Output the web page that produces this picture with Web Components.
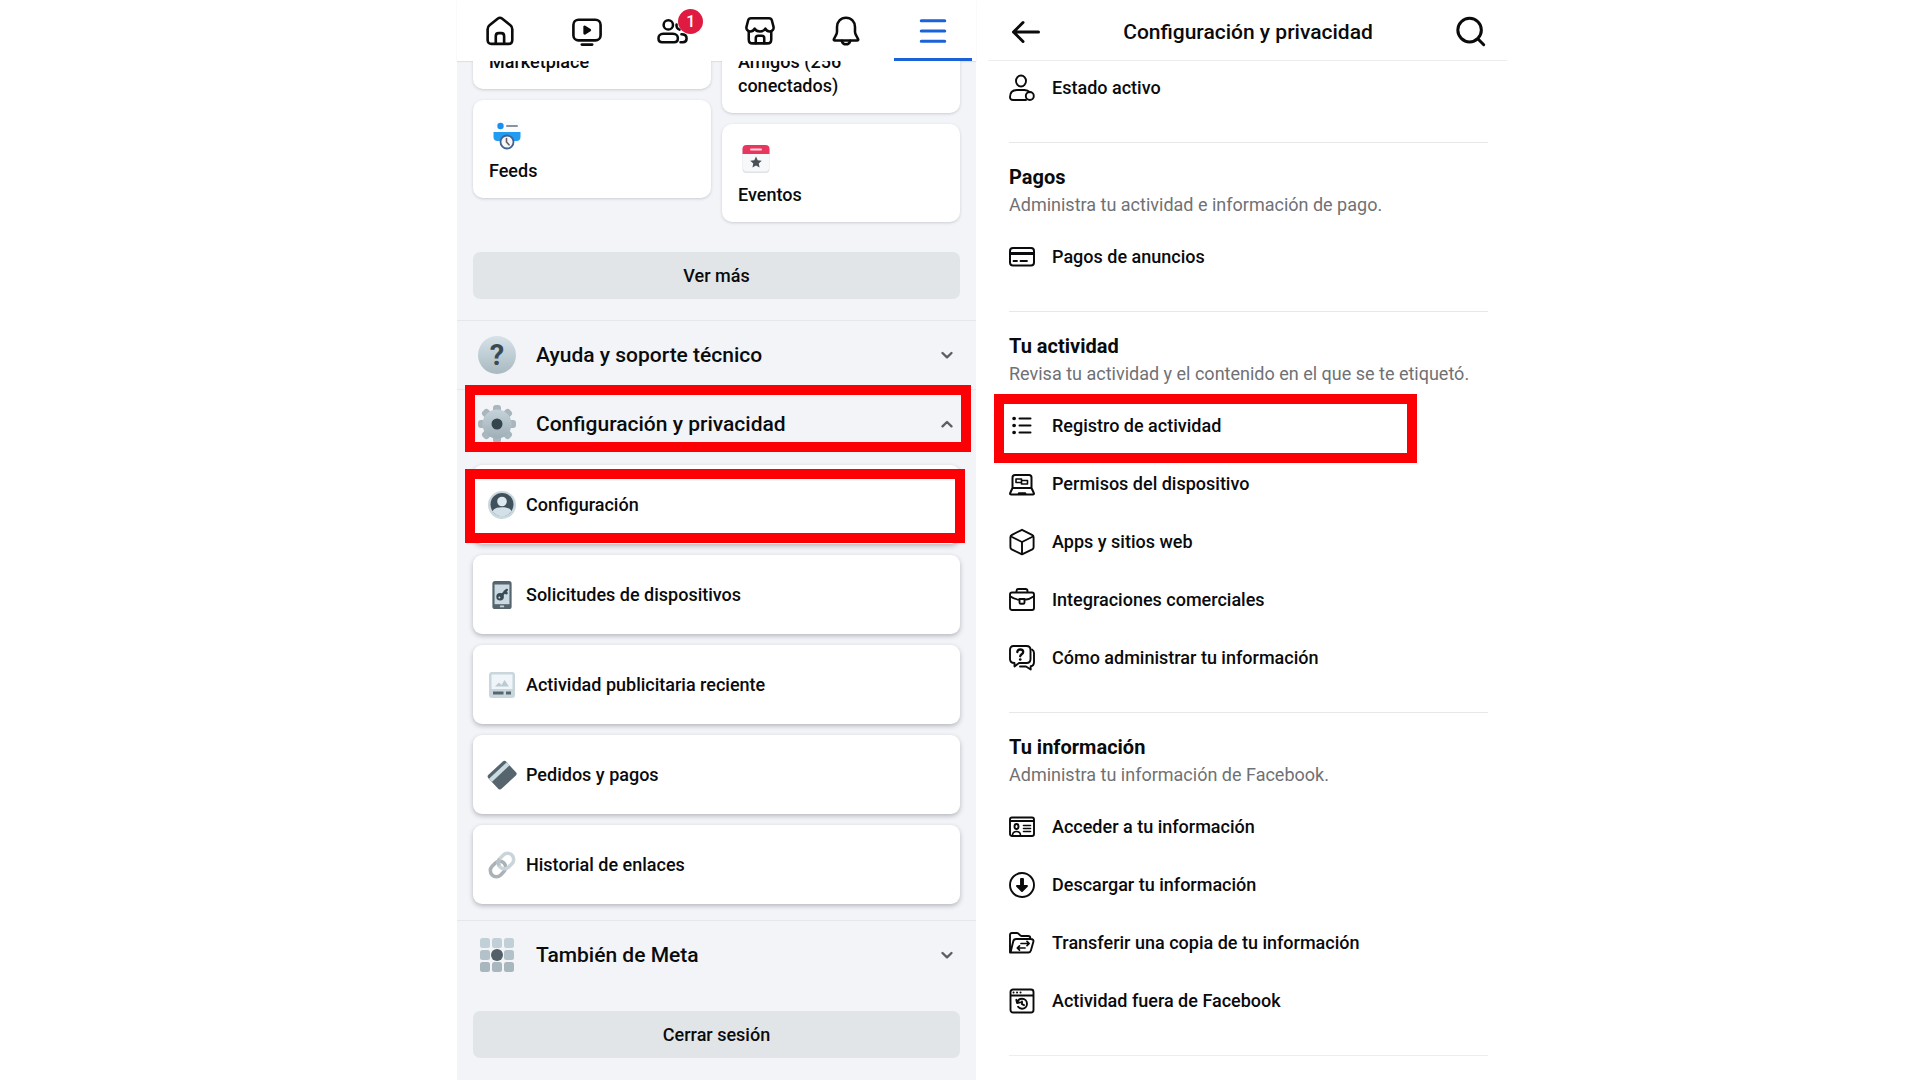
<!DOCTYPE html>
<html lang="es">
<head>
<meta charset="utf-8">
<meta name="viewport" content="width=device-width, initial-scale=1">
<title>Configuración y privacidad</title>
<style>
  body { margin: 0; background: #fff; color: #0a0b0d; font-family: Roboto, "Liberation Sans", sans-serif; }
</style>
</head>
<body>
<settings-page>
  <menu-panel slot="menu">
    <tab-bar slot="header">
      <tab-item icon="home" label="Inicio"></tab-item>
      <tab-item icon="video" label="Video"></tab-item>
      <tab-item icon="friends" label="Amigos" badge="1"></tab-item>
      <tab-item icon="store" label="Marketplace"></tab-item>
      <tab-item icon="bell" label="Notificaciones"></tab-item>
      <tab-item icon="menu" label="Menú" active></tab-item>
    </tab-bar>
    <shortcut-columns>
      <shortcut-card slot="start">Marketplace</shortcut-card>
      <shortcut-card slot="start" icon="feeds">Feeds</shortcut-card>
      <shortcut-card slot="end">Amigos (256 conectados)</shortcut-card>
      <shortcut-card slot="end" icon="events">Eventos</shortcut-card>
    </shortcut-columns>
    <wide-button class="more">Ver más</wide-button>
    <accordion-row icon="help">Ayuda y soporte técnico</accordion-row>
    <accordion-row icon="gear" open marked>Configuración y privacidad</accordion-row>
    <card-list>
      <setting-card icon="profile" marked>Configuración</setting-card>
      <setting-card icon="device">Solicitudes de dispositivos</setting-card>
      <setting-card icon="ads">Actividad publicitaria reciente</setting-card>
      <setting-card icon="card">Pedidos y pagos</setting-card>
      <setting-card icon="link">Historial de enlaces</setting-card>
    </card-list>
    <accordion-row icon="apps">También de Meta</accordion-row>
    <wide-button class="logout">Cerrar sesión</wide-button>
  </menu-panel>
  <privacy-panel slot="detail">
    <title-bar slot="header">Configuración y privacidad</title-bar>
    <settings-section continued>
      <settings-item icon="active">Estado activo</settings-item>
    </settings-section>
    <settings-section heading="Pagos" description="Administra tu actividad e información de pago.">
      <settings-item icon="payment">Pagos de anuncios</settings-item>
    </settings-section>
    <settings-section heading="Tu actividad" description="Revisa tu actividad y el contenido en el que se te etiquetó.">
      <settings-item icon="list" marked>Registro de actividad</settings-item>
      <settings-item icon="laptop">Permisos del dispositivo</settings-item>
      <settings-item icon="cube">Apps y sitios web</settings-item>
      <settings-item icon="briefcase">Integraciones comerciales</settings-item>
      <settings-item icon="question">Cómo administrar tu información</settings-item>
    </settings-section>
    <settings-section heading="Tu información" description="Administra tu información de Facebook.">
      <settings-item icon="idcard">Acceder a tu información</settings-item>
      <settings-item icon="download">Descargar tu información</settings-item>
      <settings-item icon="transfer">Transferir una copia de tu información</settings-item>
      <settings-item icon="history">Actividad fuera de Facebook</settings-item>
    </settings-section>
    <end-rule></end-rule>
  </privacy-panel>
</settings-page>

<script>
const line = (size, width, body) =>
  `<svg viewBox="0 0 ${size} ${size}" fill="none" stroke="currentColor" stroke-width="${width}" stroke-linecap="round" stroke-linejoin="round" aria-hidden="true">${body}</svg>`;
const art = (size, body) => `<svg viewBox="0 0 ${size} ${size}" aria-hidden="true">${body}</svg>`;
const steel = (id, top = '#d6e2e8', bottom = '#a9b9c1') =>
  `<defs><linearGradient id="${id}" x1="0" y1="0" x2="0" y2="1"><stop offset="0" stop-color="${top}"/><stop offset="1" stop-color="${bottom}"/></linearGradient></defs>`;
const teeth = [0, 45, 90, 135, 180, 225, 270, 315]
  .map(a => `<rect x="15" y="0" width="8" height="9" rx="3" transform="rotate(${a} 19 19)"/>`).join('');
const tiles = [0, 1, 2].map(r => [0, 1, 2]
  .map(c => `<rect x="${2 + c * 12}" y="${2 + r * 12}" width="10" height="10" rx="2.5" fill="${['#c0d0d6', '#b3c2c9', '#a8b6bd'][r]}"/>`).join('')).join('');

const ICONS = {
  home: line(32, 2.8, '<path d="M2.8 14c0-1.8.6-3 2-4.1l9-7.2c1.3-1 3-1 4.3 0l9 7.2c1.4 1.1 2 2.300 2 4.100v11.500c0 2.800-1.500 4.200-4.200 4.200H7c-2.800 0-4.200-1.400-4.200-4.200z"/><path d="M11.500 29.500v-8c0-2.200 1-3.300 3-3.300h2.900c2 0 3 1.100 3 3.300v8"/>'),
  video: line(32, 2.8, '<rect x="1.500" y="4" width="29" height="22" rx="5.500"/><path d="M10.500 30.500h11"/><path d="M13.500 11.500v7l5.500-3.500z" fill="currentColor"/>'),
  friends: line(32, 2.7, '<circle cx="11" cy="9.500" r="5"/><path d="M5.500 19h10.500c3.300 0 5.200 2.200 5.200 4.800 0 2.700-1.500 4.200-4 4.200H4.500c-2.500 0-4-1.500-4-4.200C.5 21.200 2.300 19 5.500 19z"/><path d="M23 14.500c-2.600-1-3.600-3-3.200-5.500M25 19.500c3.500 0 5.500 1.800 5.500 4.500 0 2.600-1.500 4-4 4h-2.500"/>'),
  store: line(32, 2.7, '<path d="M6.500 2.500h19c1.800 0 2.700.6 3.200 2.300l1.800 7c.3 2.700-1.500 4.700-4.200 4.700-2.200 0-3.600-1-4.600-3-1 2-3.200 3-5.700 3s-4.700-1-5.700-3c-1 2-2.400 3-4.600 3-2.700 0-4.500-2-4.200-4.700l1.800-7c.5-1.700 1.400-2.300 3.200-2.300z"/><path d="M4 16.500V25c0 2.800 1.300 4.200 4 4.200h16c2.700 0 4-1.400 4-4.200v-8.500"/><path d="M11.500 29v-5.500c0-1.700.8-2.500 2.500-2.500h4c1.700 0 2.500.8 2.500 2.500V29"/>'),
  bell: line(32, 2.7, '<path d="M16 1.800c-5.600 0-9.600 4.200-9.600 9.800v5.200c0 1.500-.5 2.600-1.300 4l-2 3.800c-.4.900 0 1.600 1 1.600h23.800c1 0 1.400-.7 1-1.600l-2-3.800c-.8-1.400-1.300-2.500-1.300-4v-5.200c0-5.600-4-9.800-9.600-9.800z"/><path d="M11.500 26.500c.6 2.400 2.300 3.700 4.500 3.700s3.900-1.300 4.500-3.700"/>'),
  menu: line(32, 3.3, '<path d="M3.500 5h25M3.500 16h25M3.500 27h25"/>'),
  back: line(30, 3, '<path d="M2.500 15h25M12 5.500L2.500 15l9.500 9.500"/>'),
  search: line(34, 3.2, '<circle cx="15.500" cy="15" r="12.500"/><path d="M24.500 24.500l6 6"/>'),
  down: line(14, 2.4, '<path d="M2.500 5l4.500 4.300L11.500 5"/>'),
  up: line(14, 2.4, '<path d="M2.500 9.300L7 5l4.500 4.300"/>'),

  feeds: art(36, '<rect x="5" y="3" width="26" height="20" rx="3" fill="#fafbfd"/><circle cx="11.500" cy="8" r="3.200" fill="#1a8ff0"/><path d="M18 8h10" stroke="#8b929b" stroke-width="2" stroke-linecap="round"/><path d="M4.500 14h27v5c0 2.500-1.500 4-4 4h-19c-2.500 0-4-1.500-4-4z" fill="#229bf3"/><circle cx="18" cy="24" r="6.500" fill="#f4f7fb" stroke="#41618f" stroke-width="1.800"/><path d="M17.500 20.500V24l2.500 2.800" fill="none" stroke="#6d5b5b" stroke-width="1.600" stroke-linecap="round"/>'),
  events: art(36, '<g transform="translate(0 -2)"><rect x="4.500" y="5" width="27" height="28" rx="4" fill="#dfe3e8"/><rect x="5" y="5" width="26" height="26.500" rx="4" fill="#f7f8fa"/><path d="M4.500 14V9c0-2.700 1.500-4 4-4h19c2.500 0 4 1.300 4 4v5z" fill="#e8365e"/><path d="M13 9.500h10" stroke="#ffd5df" stroke-width="2" stroke-linecap="round"/><path d="M18 16.500l1.700 3.800 4.100.4-3.100 2.700.9 4.100-3.600-2.100-3.600 2.100.9-4.100-3.100-2.700 4.100-.4z" fill="#4c5157"/></g>'),
  help: art(38, steel('hg') + '<circle cx="19" cy="19" r="19" fill="url(#hg)"/><text x="19" y="29" text-anchor="middle" font-family="Roboto, sans-serif" font-weight="700" font-size="29" fill="#3b4a52">?</text>'),
  gear: art(38, steel('gg', '#c5d2d9', '#9fafb7') + `<g fill="#a9b6bd">${teeth}</g><circle cx="19" cy="19" r="14.500" fill="url(#gg)"/><circle cx="19" cy="19" r="5.500" fill="#35454d"/>`),
  apps: art(38, tiles + '<circle cx="19" cy="19" r="6" fill="#536067"/>'),
  profile: art(28, '<circle cx="14" cy="14" r="14" fill="#cbd8de"/><circle cx="14" cy="13.500" r="11.500" fill="#41515b"/><circle cx="14" cy="10.500" r="4.800" fill="#dde8ee"/><path d="M4.500 20.200c1.500-3 5-4 9.500-4s8 1 9.500 4a11.500 11.500 0 0 1-19 0z" fill="#d3e0e7"/>'),
  device: art(32, '<rect x="5" y="0" width="22" height="32" rx="3" fill="#55646d"/><rect x="7.500" y="4" width="17" height="22.500" fill="#cbdae2"/><circle cx="13.800" cy="18" r="4.300" fill="#394a54"/><path d="M15.500 16.500l6-6.300M19 12l2.200 2" stroke="#394a54" stroke-width="2.800" stroke-linecap="round"/><circle cx="13" cy="18.800" r="1.100" fill="#cbdae2"/><rect x="13.500" y="28" width="5" height="2" rx="1" fill="#c6d2d8"/>'),
  ads: art(28, '<rect x="1" y="1" width="26" height="26" rx="3" fill="#c9d6dd"/><rect x="3.500" y="3.500" width="21" height="14.500" fill="#eff5f8"/><path d="M7 15.500l4-4 2.500 2.500 3-5 4.500 6.500z" fill="#bccad1"/><path d="M5 22h10.500M18 22h5" stroke="#56656e" stroke-width="2.800"/>'),
  card: art(30, '<g transform="rotate(-43 15 15)"><rect x="2" y="5" width="26" height="20.500" rx="2.500" fill="#56656d"/><path d="M2 8.500h26v4.500H2z" fill="#cbdbe2"/></g>'),
  link: art(30, '<g fill="none" transform="rotate(-45 15 15)"><rect x="0" y="8.500" width="18" height="13" rx="6.500" stroke="#aab2b8" stroke-width="3.800"/><rect x="12" y="8.500" width="18" height="13" rx="6.500" stroke="#cad5da" stroke-width="3.800"/><path d="M12.500 13.500c.8-3.500 2.500-5 5.500-5" stroke="#b8c3c8" stroke-width="3.800"/></g>'),

  active: line(26, 1.9, '<ellipse cx="12" cy="6" rx="5" ry="5.500"/><path d="M17 25H4c-1.800 0-3-1-3-3 0-4.500 2.800-7 7-7h7.500c2.500 0 4 .7 5.300 2.200"/><circle cx="20.800" cy="21" r="4"/>'),
  payment: line(26, 2, '<rect x="1" y="4" width="24" height="17.500" rx="3"/><path d="M1.500 9.500h23" stroke-width="3"/><path d="M4.500 17h3.500M11.500 17H18" stroke-width="1.800"/>'),
  list: line(26, 2, '<path d="M10.500 5.500h11M10.500 12.500h11M10.500 19.500h11"/><path d="M5 5.500h.2M5 12.500h.2M5 19.500h.2" stroke-width="3.600"/>'),
  laptop: line(26, 2, '<path d="M3.500 16.500v-10c0-1.800.8-2.500 2.500-2.500h14c1.700 0 2.500.7 2.500 2.500v10M3.500 17l-2.300 5c-.4 1 0 1.500 1 1.500h21.600c1 0 1.400-.5 1-1.500l-2.300-5z"/><path d="M7 8h5.500v3.500H7zM12.500 9.500h6V13h-6z" stroke-width="1.600"/><path d="M10 22.500h6" stroke-width="2.500"/>'),
  cube: line(26, 1.9, '<path d="M13 .8l10 5c1.200.6 1.600 1.200 1.600 2.500v10c0 1-.4 1.600-1.300 2.100L13 25.400 2.700 20.400c-.9-.5-1.300-1.100-1.300-2.100v-10C1.400 7 1.800 6.400 3 5.800z"/><path d="M2 7.500l11 5.500 11-5.500M13 13v12"/>'),
  briefcase: line(26, 1.9, '<rect x="1" y="5.500" width="24" height="17.500" rx="2"/><path d="M7.500 5V4c0-1.200.7-2 2-2h7c1.300 0 2 .8 2 2v1M1.500 9.500c3 2.300 6 3 9 3.300M24.500 9.500c-3 2.300-6 3-9 3.300M10.500 12h5v3.500c0 .8-.5 1.300-1.300 1.300h-2.400c-.8 0-1.300-.5-1.300-1.300z"/>'),
  question: line(26, 1.9, '<path d="M4.500 1h13c2.500 0 4 1.500 4 4v9c0 2.500-1.500 4-4 4H10l-4.500 3.500V18c-3 0-4.500-1.500-4.500-4V5c0-2.500 1.200-4 3.500-4z"/><path d="M23 4.500c1.300.8 2 2 2 3.500v9c0 2.500-1.200 4-3.300 4.200v3.300L17 21.500h-6"/><path d="M8.300 7c.2-1.700 1.300-2.500 2.900-2.500 1.800 0 3 .9 3 2.500 0 2.200-3 2.200-3 4.300" stroke-width="2.300"/><path d="M11.200 14.500h.1" stroke-width="2.600"/>'),
  idcard: line(26, 1.9, '<rect x="1" y="3.500" width="24" height="18.500" rx="2"/><path d="M1.500 7h23"/><ellipse cx="7.500" cy="12.500" rx="2" ry="2.500"/><path d="M3.500 21c.3-2.500 1.700-3.500 4-3.500s3.700 1 4 3.500M14.500 11.500h7M14.500 14.500h7M14.500 17.500h7" stroke-width="1.600"/>'),
  download: line(26, 1.9, '<circle cx="13" cy="13" r="12"/><path d="M12 7h2v7h4l-5 5-5-5h4z" fill="currentColor"/>'),
  transfer: line(26, 1.9, '<path d="M1 22.500V5c0-1.300.7-2 2-2h5c2 0 2.800 3 4.500 3H19c1.500 0 2.300.8 2.300 2.300M1.500 22.500l2.700-11c.4-1.800 1.300-2.500 3-2.500h14.500c2.300 0 3.200 1.200 2.600 3l-2.400 8.500c-.4 1.400-1.200 2-2.600 2z"/><path d="M12 13.500h8M18 11.300l2.200 2.200-2.200 2.200M16 18H8.500M10.500 15.800L8.300 18l2.200 2.200" stroke-width="1.700"/>'),
  history: line(26, 1.9, '<rect x="1.500" y="1.500" width="23" height="23" rx="2.500"/><path d="M2 7.500h22"/><path d="M4.500 4.500h.1M8 4.500h.1M11.500 4.500h.1" stroke-width="1.900"/><path d="M8.300 14.500c.6-2.400 2.300-3.700 4.700-3.700 2.900 0 5 2 5 4.900s-2.100 5-5 5c-1.700 0-3-.6-3.900-1.900M7.300 11.800l.8 3.200 3.200-.6M13 13.500v2.700l2 1"/>')
};

// Red frame drawn over a row that carries the "marked" attribute.
const MARK = `
  :host([marked]) { position: relative; }
  :host([marked])::after { content: ""; position: absolute; inset: var(--frame, 0); border: 10px solid #fb0004; pointer-events: none; z-index: 1; }`;
const RESET = `
  *, *::before, *::after { box-sizing: border-box; }
  button { font: inherit; color: inherit; background: none; border: 0; margin: 0; padding: 0; text-align: left; cursor: pointer; }
  a { color: inherit; text-decoration: none; }`;

function define(name, css, html) {
  customElements.define(name, class extends HTMLElement {
    constructor() {
      super();
      this.attachShadow({ mode: 'open' });
    }
    connectedCallback() {
      const attr = key => this.getAttribute(key) || '';
      this.shadowRoot.innerHTML = `<style>${RESET}${css}</style>${typeof html === 'function' ? html(attr, this) : html}`;
    }
  });
}

define('ui-icon', `
  :host { display: block; flex: none; width: var(--size, 26px); height: var(--size, 26px); }
  svg { display: block; width: 100%; height: 100%; overflow: visible; }`,
  attr => ICONS[attr('name')] || '');

define('settings-page', `
  :host { display: grid; grid-template-columns: 457fr 519fr 12fr 519fr 413fr; min-height: 100vh; }
  ::slotted([slot="menu"]) { grid-column: 2; }
  ::slotted([slot="detail"]) { grid-column: 4; }`,
  '<slot name="menu"></slot><slot name="detail"></slot>');

define('menu-panel', `
  :host { display: flex; flex-direction: column; background: #f3f4f8; min-width: 0; }
  main { overflow: hidden; flex: 1; padding-bottom: 21px; }
  ::slotted(shortcut-columns) { margin: -70px 16px 0; }
  ::slotted(card-list) { margin: 7px 16px 16px; }
  ::slotted(.more) { margin: 30px 16px 21px; }
  ::slotted(.logout) { margin: 22px 16px 0; }`,
  '<slot name="header"></slot><main><slot></slot></main>');

define('tab-bar', `
  :host { display: block; background: #fff; box-shadow: 0 1px 1px #dfe1e6; }
  nav { display: flex; height: 61px; }
  ::slotted(*) { flex: 1; }`,
  '<nav><slot></slot></nav>');

define('tab-item', `
  :host { display: flex; }
  button { position: relative; flex: 1; display: flex; align-items: center; justify-content: center; margin: 0 4px; border-bottom: 3px solid transparent; padding-top: 4px; }
  ui-icon { --size: 30px; }
  :host([active]) button { color: #1b62d8; border-color: #1b62d8; }
  .badge { position: absolute; top: 9px; left: calc(50% + 5px); width: 25px; height: 25px; border-radius: 50%; background: #e01b41; color: #fff; font-size: 16px; line-height: 25px; font-weight: 500; text-align: center; }`,
  attr => `<button type="button" aria-label="${attr('label')}"><ui-icon name="${attr('icon')}"></ui-icon>${attr('badge') ? `<span class="badge">${attr('badge')}</span>` : ''}</button>`);

define('shortcut-columns', `
  :host { display: grid; grid-template-columns: 1fr 1fr; gap: 11px; align-items: start; }
  div { display: flex; flex-direction: column; gap: 11px; }`,
  '<div><slot name="start"></slot></div><div><slot name="end"></slot></div>');

define('shortcut-card', `
  :host { display: block; }
  a { display: flex; flex-direction: column; gap: 5px; padding: 18px 16px 15px; border-radius: 10px; background: #fff; box-shadow: 0 1px 3px #c9ccd2; font-size: 18px; line-height: 24px; font-weight: 500; }
  ui-icon { --size: 36px; }
  .label { max-width: 140px; }`,
  attr => `<a href="#"><ui-icon name="${attr('icon')}"></ui-icon><span class="label"><slot></slot></span></a>`);

define('wide-button', `
  :host { display: block; }
  button { display: block; width: 100%; height: 47px; border-radius: 7px; background: #e2e5e8; font-size: 18px; line-height: 24px; font-weight: 500; text-align: center; }`,
  '<button type="button"><slot></slot></button>');

define('accordion-row', `${MARK}
  :host { display: block; --frame: -4px 5px 6px 8px; }
  button { display: flex; align-items: center; gap: 20px; width: 100%; height: 69px; padding: 0 22px 0 21px; border-top: 1px solid #e5e7eb; font-size: 21px; line-height: 28px; font-weight: 500; }
  ui-icon { --size: 38px; }
  .label { flex: 1; }
  .chevron { --size: 14px; color: #5b6067; }`,
  (attr, el) => `<button type="button" aria-expanded="${el.hasAttribute('open')}"><ui-icon name="${attr('icon')}"></ui-icon><span class="label"><slot></slot></span><ui-icon class="chevron" name="${el.hasAttribute('open') ? 'up' : 'down'}"></ui-icon></button>`);

define('card-list', `
  :host { display: flex; flex-direction: column; gap: 11px; }`,
  '<slot></slot>');

define('setting-card', `${MARK}
  :host { display: block; --frame: 4px -5px 1px -8px; }
  a { display: flex; align-items: center; gap: 10px; height: 79px; padding: 0 15px; border-radius: 9px; background: #fff; box-shadow: 0 2px 5px #b4b7bd; font-size: 18px; line-height: 24px; font-weight: 500; }
  ui-icon { --size: 28px; }
  ui-icon[name="device"] { width: 28px; --size: 32px; }`,
  attr => `<a href="#"><ui-icon name="${attr('icon')}"></ui-icon><span><slot></slot></span></a>`);

define('privacy-panel', `
  :host { display: flex; flex-direction: column; background: #fff; min-width: 0; }
  main { padding: 0 19px 0 21px; }`,
  '<slot name="header"></slot><main><slot></slot></main>');

define('title-bar', `
  :host { display: block; }
  header { display: flex; align-items: center; justify-content: space-between; height: 61px; padding: 3px 20px 0 23px; border-bottom: 1px solid #eceded; }
  h1 { margin: 0; font-size: 21px; line-height: 28px; font-weight: 500; }
  button ui-icon { --size: 30px; }
  .search ui-icon { --size: 32px; }`,
  '<header><button type="button" aria-label="Atrás"><ui-icon name="back"></ui-icon></button><h1><slot></slot></h1><button type="button" class="search" aria-label="Buscar"><ui-icon name="search"></ui-icon></button></header>');

define('settings-section', `
  :host { display: block; border-top: 1px solid #e6e7e9; padding: 21px 0 25px; }
  :host([continued]) { border: 0; padding-top: 0; margin-top: -2px; }
  h2 { margin: 0; font-size: 20px; line-height: 26px; font-weight: 700; }
  p { margin: 0 0 8px; color: #6f7174; font-size: 18px; line-height: 30px; }`,
  attr => `${attr('heading') ? `<h2>${attr('heading')}</h2><p>${attr('description')}</p>` : ''}<slot></slot>`);

define('settings-item', `${MARK}
  :host { display: block; --frame: -3px 71px -8px -15px; }
  a { display: flex; align-items: center; gap: 17px; height: 58px; font-size: 18px; line-height: 24px; font-weight: 500; }`,
  attr => `<a href="#"><ui-icon name="${attr('icon')}"></ui-icon><span><slot></slot></span></a>`);

define('end-rule', `
  :host { display: block; border-top: 1px solid #ededee; }`, '');
</script>
</body>
</html>
